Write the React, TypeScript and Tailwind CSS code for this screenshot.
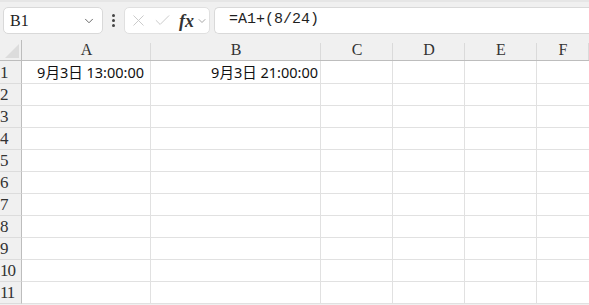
import { ChevronDown, X, Check } from 'lucide-react';

const cols = ['A', 'B', 'C', 'D', 'E', 'F'];
const rows = [1, 2, 3, 4, 5, 6, 7, 8, 9, 10, 11];

export default function App() {
  return (
    <main className="w-[589px] h-[305px] overflow-hidden bg-[#f0f0f0] font-['Noto_Sans','Noto_Sans_CJK_SC',sans-serif]">
      {/* formula bar */}
      <div className="flex items-center h-[40px] pb-[1px] border-t-2 border-[#e6e6e6]">
        <div className="ml-[3px] w-[100px] h-[27px] bg-white border border-[#d9d9d9] rounded-[5px] flex items-center justify-between pl-[6px] pr-[6px]">
          <span className="text-[16px] text-[#222] font-['Liberation_Serif',serif]">B1</span>
          <ChevronDown className="w-[14px] h-[14px] text-[#555]" strokeWidth={1.5} />
        </div>
        <div className="w-[21px] flex flex-col items-center gap-[2px]">
          <span className="w-[3px] h-[3px] bg-[#444] rounded-full" />
          <span className="w-[3px] h-[3px] bg-[#444] rounded-full" />
          <span className="w-[3px] h-[3px] bg-[#444] rounded-full" />
        </div>
        <div className="w-[86px] h-[27px] bg-white border border-[#e0e0e0] rounded-[5px] flex items-center pl-[4px]">
          <X className="w-[19px] h-[19px] text-[#c8c8c8]" strokeWidth={1.2} />
          <Check className="w-[19px] h-[19px] text-[#c8c8c8] ml-[5px]" strokeWidth={1.2} />
          <span className="ml-[7px] text-[18px] italic font-semibold text-[#333] leading-none font-['Liberation_Serif',serif]">fx</span>
          <ChevronDown className="w-[12px] h-[12px] text-[#888] ml-[2px]" strokeWidth={1.5} />
        </div>
        <div className="ml-[4px] flex-1 h-[27px] bg-white border border-[#d9d9d9] rounded-l-[5px] border-r-0 flex items-center pl-[14px]">
          <span className="text-[15px] text-[#1f1f1f] font-['Liberation_Mono',monospace]">=A1+(8/24)</span>
        </div>
      </div>

      {/* sheet */}
      <div className="grid grid-cols-[22px_129px_170px_72px_72px_72px_1fr] grid-rows-[21px_23px_repeat(10,22px)] bg-white">
        <div className="bg-[#f0f0f0] border-r border-b border-[#bdbdbd] relative">
          <div className="absolute right-[2px] bottom-[2px] w-0 h-0 border-l-[14px] border-l-transparent border-b-[14px] border-b-[#dcdcdc]" />
        </div>
        {cols.map((c) => (
          <div
            key={c}
            className="bg-[#f0f0f0] border-b border-[#bdbdbd] flex items-end justify-center relative"
          >
            <div className="absolute right-0 top-[3px] bottom-0 w-px bg-[#dadada]" />
            <span className="text-[16px] text-[#333] leading-none mb-[2px] font-['Liberation_Serif',serif]">{c}</span>
          </div>
        ))}
        {rows.map((r) => (
          <Row key={r} r={r} />
        ))}
      </div>
    </main>
  );
}

function Row({ r }: { r: number }) {
  const a = r === 1 ? '9月3日 13:00:00' : '';
  const b = r === 1 ? '9月3日 21:00:00' : '';
  return (
    <>
      <div className="bg-[#f0f0f0] border-r border-b border-r-[#bdbdbd] border-b-[#dcdcdc] flex items-center">
        <span className="text-[17px] text-[#333] leading-none tracking-[-1px] font-['Liberation_Serif',serif]">{r}</span>
      </div>
      <div className="border-r border-b border-[#e1e1e1] flex items-center justify-end pr-[6px]">
        <span className="text-[14.5px] text-[#111] leading-none">{a}</span>
      </div>
      <div className="border-r border-b border-[#e1e1e1] flex items-center justify-end pr-[2px]">
        <span className="text-[14.5px] text-[#111] leading-none">{b}</span>
      </div>
      <div className="border-r border-b border-[#e1e1e1]" />
      <div className="border-r border-b border-[#e1e1e1]" />
      <div className="border-r border-b border-[#e1e1e1]" />
      <div className="border-b border-[#e1e1e1]" />
    </>
  );
}
